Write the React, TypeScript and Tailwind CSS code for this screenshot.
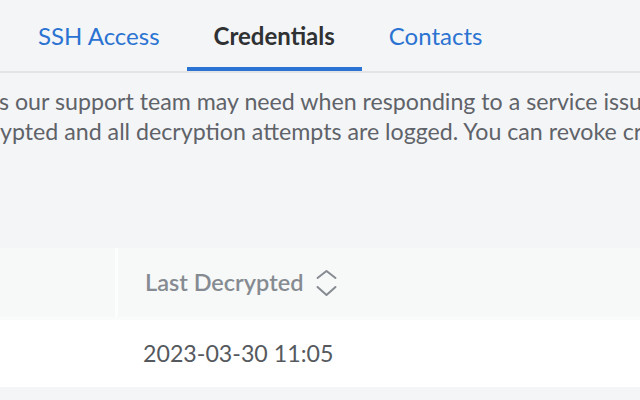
export default function App() {
  const tabs = [
    { label: "SSH Access", active: false },
    { label: "Credentials", active: true },
    { label: "Contacts", active: false },
  ]

  return (
    <div className="w-[640px] h-[400px] overflow-hidden bg-[#f4f5f7] font-['Lato','Noto_Sans',sans-serif]">
      {/* Tabs */}
      <div className="flex h-[73px] pl-[11px] border-b-2 border-[#e2e4e7]">
        {tabs.map((tab) => (
          <div
            key={tab.label}
            className={
              tab.active
                ? "px-[27px] pt-[20px] h-[71px] border-b-4 border-[#2a73d2] text-[24px] leading-[32px] font-bold text-[#2f3133]"
                : "px-[27px] pt-[20px] h-[71px] text-[24px] leading-[32px] text-[#2a73d2]"
            }
          >
            {tab.label}
          </div>
        ))}
      </div>

      {/* Description */}
      <div className="mt-[13px] text-[23.2px] leading-[30px] text-[#5f6369] whitespace-nowrap">
        <div className="-ml-[1px]">
          s our support team may need when responding to a service issue.
        </div>
        <div>
          ypted and all decryption attempts are logged. You can revoke credentials at any time.
        </div>
      </div>

      {/* Table */}
      <div className="mt-[102px]">
        <div className="flex h-[69px] bg-[#f7f8f8]">
          <div className="w-[115px]" />
          <div className="w-[3px] bg-[#fcfdfd]" />
          <div className="flex-1 flex items-center pl-[27px] gap-[13px]">
            <span className="text-[23.5px] font-semibold text-[#858b91]">
              Last Decrypted
            </span>
            <svg width="21" height="28" viewBox="0 0 21 28" fill="none" stroke="#858b91" strokeWidth="2" strokeLinecap="round" strokeLinejoin="round">
              <polyline points="1.5,9 10.5,2 19.5,9" />
              <polyline points="1.5,18 10.5,26 19.5,18" />
            </svg>
          </div>
        </div>
        <div className="h-[3px] bg-[#fafbfb]" />
        <div className="flex items-center h-[67px] bg-white pl-[143px] text-[23.2px] text-[#55595e]">
          2023-03-30 11:05
        </div>
      </div>
    </div>
  )
}
